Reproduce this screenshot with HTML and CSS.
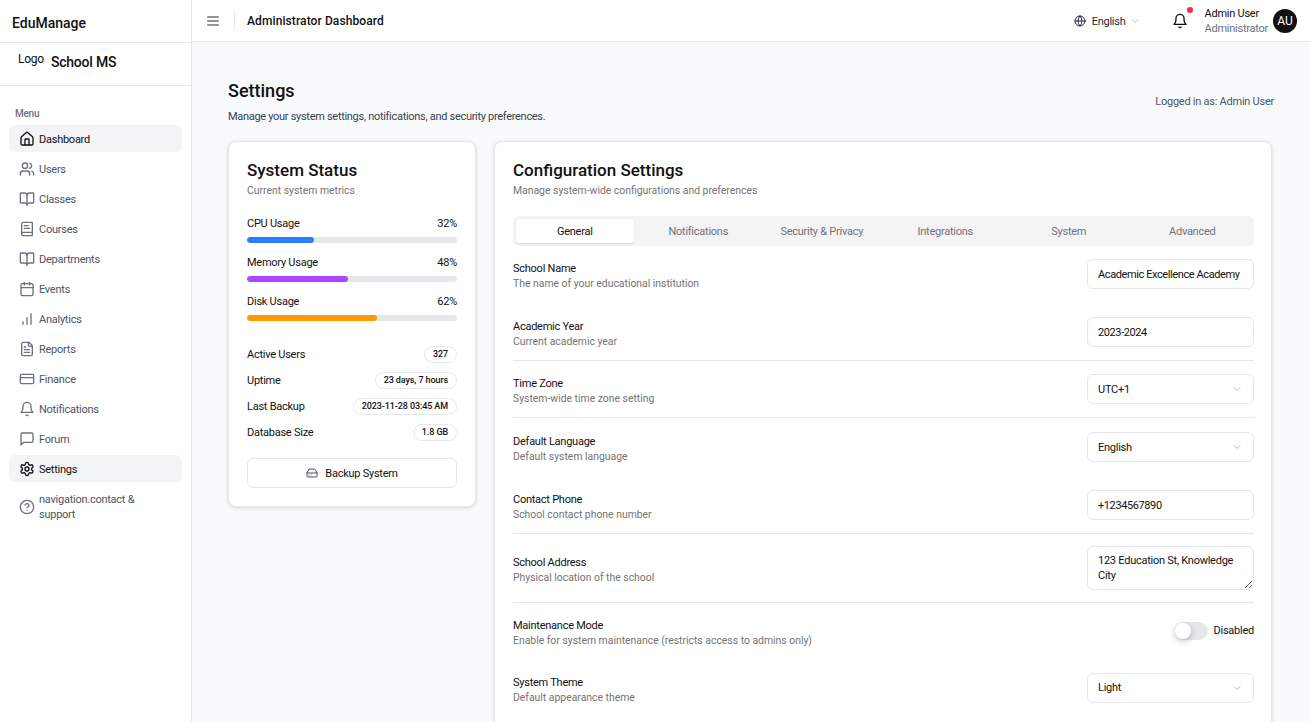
FILE: index.html
```html
<!DOCTYPE html>
<html lang="en">
<head>
  <meta charset="UTF-8" />
  <title>EduManage – Settings</title>
  <link rel="stylesheet" href="styles.css">
</head>
<body>
  <svg class="defs" width="0" height="0">
    <symbol id="i-home" viewBox="0 0 24 24"><path d="M15 21v-8a1 1 0 0 0-1-1h-4a1 1 0 0 0-1 1v8"/><path d="M3 10a2 2 0 0 1 .709-1.528l7-5.999a2 2 0 0 1 2.582 0l7 5.999A2 2 0 0 1 21 10v9a2 2 0 0 1-2 2H5a2 2 0 0 1-2-2z"/></symbol>
    <symbol id="i-users" viewBox="0 0 24 24"><path d="M16 21v-2a4 4 0 0 0-4-4H6a4 4 0 0 0-4 4v2"/><circle cx="9" cy="7" r="4"/><path d="M22 21v-2a4 4 0 0 0-3-3.87"/><path d="M16 3.13a4 4 0 0 1 0 7.75"/></symbol>
    <symbol id="i-book" viewBox="0 0 24 24"><path d="M12 7v14"/><path d="M3 18a1 1 0 0 1-1-1V4a1 1 0 0 1 1-1h5a4 4 0 0 1 4 4 4 4 0 0 1 4-4h5a1 1 0 0 1 1 1v13a1 1 0 0 1-1 1h-6a3 3 0 0 0-3 3 3 3 0 0 0-3-3z"/></symbol>
    <symbol id="i-booktext" viewBox="0 0 24 24"><path d="M4 19.5v-15A2.5 2.5 0 0 1 6.5 2H19a1 1 0 0 1 1 1v18a1 1 0 0 1-1 1H6.5a1 1 0 0 1 0-5H20"/><path d="M8 11h8"/><path d="M8 7h6"/></symbol>
    <symbol id="i-calendar" viewBox="0 0 24 24"><path d="M8 2v4"/><path d="M16 2v4"/><rect x="3" y="4" width="18" height="18" rx="2"/><path d="M3 10h18"/></symbol>
    <symbol id="i-chart" viewBox="0 0 24 24"><path d="M12 20V10"/><path d="M18 20V4"/><path d="M6 20v-4"/></symbol>
    <symbol id="i-file" viewBox="0 0 24 24"><path d="M15 2H6a2 2 0 0 0-2 2v16a2 2 0 0 0 2 2h12a2 2 0 0 0 2-2V7Z"/><path d="M14 2v4a2 2 0 0 0 2 2h4"/><path d="M10 9H8"/><path d="M16 13H8"/><path d="M16 17H8"/></symbol>
    <symbol id="i-card" viewBox="0 0 24 24"><rect x="2" y="5" width="20" height="14" rx="2"/><path d="M2 10h20"/></symbol>
    <symbol id="i-bell" viewBox="0 0 24 24"><path d="M6 8a6 6 0 0 1 12 0c0 7 3 9 3 9H3s3-2 3-9"/><path d="M10.3 21a1.94 1.94 0 0 0 3.4 0"/></symbol>
    <symbol id="i-message" viewBox="0 0 24 24"><path d="M21 15a2 2 0 0 1-2 2H7l-4 4V5a2 2 0 0 1 2-2h14a2 2 0 0 1 2 2z"/></symbol>
    <symbol id="i-gear" viewBox="0 0 24 24"><path d="M12.22 2h-.44a2 2 0 0 0-2 2v.18a2 2 0 0 1-1 1.73l-.43.25a2 2 0 0 1-2 0l-.15-.08a2 2 0 0 0-2.73.73l-.22.38a2 2 0 0 0 .73 2.73l.15.1a2 2 0 0 1 1 1.72v.51a2 2 0 0 1-1 1.74l-.15.09a2 2 0 0 0-.73 2.73l.22.38a2 2 0 0 0 2.73.73l.15-.08a2 2 0 0 1 2 0l.43.25a2 2 0 0 1 1 1.73V20a2 2 0 0 0 2 2h.44a2 2 0 0 0 2-2v-.18a2 2 0 0 1 1-1.73l.43-.25a2 2 0 0 1 2 0l.15.08a2 2 0 0 0 2.73-.73l.22-.39a2 2 0 0 0-.73-2.73l-.15-.08a2 2 0 0 1-1-1.74v-.5a2 2 0 0 1 1-1.74l.15-.09a2 2 0 0 0 .73-2.73l-.22-.38a2 2 0 0 0-2.73-.73l-.15.08a2 2 0 0 1-2 0l-.43-.25a2 2 0 0 1-1-1.73V4a2 2 0 0 0-2-2z"/><circle cx="12" cy="12" r="3"/></symbol>
    <symbol id="i-help" viewBox="0 0 24 24"><circle cx="12" cy="12" r="10"/><path d="M9.09 9a3 3 0 0 1 5.83 1c0 2-3 3-3 3"/><path d="M12 17h.01"/></symbol>
    <symbol id="i-globe" viewBox="0 0 24 24"><circle cx="12" cy="12" r="10"/><path d="M12 2a14.5 14.5 0 0 0 0 20 14.5 14.5 0 0 0 0-20"/><path d="M2 12h20"/></symbol>
    <symbol id="i-chevron" viewBox="0 0 24 24"><path d="m6 9 6 6 6-6"/></symbol>
    <symbol id="i-menu" viewBox="0 0 24 24"><path d="M4 6h16"/><path d="M4 12h16"/><path d="M4 18h16"/></symbol>
    <symbol id="i-drive" viewBox="0 0 24 24"><path d="M22 12H2"/><path d="M5.45 5.11 2 12v6a2 2 0 0 0 2 2h16a2 2 0 0 0 2-2v-6l-3.45-6.89A2 2 0 0 0 16.76 4H7.24a2 2 0 0 0-1.79 1.11z"/><path d="M6 16h.01"/><path d="M10 16h.01"/></symbol>
  </svg>

  <aside class="sidebar">
    <div class="brand">EduManage</div>
    <div class="school"><span class="logo-alt">Logo</span><span class="school-name">School MS</span></div>
    <nav class="nav">
      <div class="nav-label">Menu</div>
      <a class="nav-item active"><svg class="icon"><use href="#i-home"/></svg>Dashboard</a>
      <a class="nav-item"><svg class="icon"><use href="#i-users"/></svg>Users</a>
      <a class="nav-item"><svg class="icon"><use href="#i-book"/></svg>Classes</a>
      <a class="nav-item"><svg class="icon"><use href="#i-booktext"/></svg>Courses</a>
      <a class="nav-item"><svg class="icon"><use href="#i-book"/></svg>Departments</a>
      <a class="nav-item"><svg class="icon"><use href="#i-calendar"/></svg>Events</a>
      <a class="nav-item"><svg class="icon"><use href="#i-chart"/></svg>Analytics</a>
      <a class="nav-item"><svg class="icon"><use href="#i-file"/></svg>Reports</a>
      <a class="nav-item"><svg class="icon"><use href="#i-card"/></svg>Finance</a>
      <a class="nav-item"><svg class="icon"><use href="#i-bell"/></svg>Notifications</a>
      <a class="nav-item"><svg class="icon"><use href="#i-message"/></svg>Forum</a>
      <a class="nav-item active"><svg class="icon"><use href="#i-gear"/></svg>Settings</a>
      <a class="nav-item tall"><svg class="icon"><use href="#i-help"/></svg>navigation.contact &amp; support</a>
    </nav>
  </aside>

  <div class="content">
    <header class="topbar">
      <button class="menu-btn"><svg class="icon"><use href="#i-menu"/></svg></button>
      <h1 class="topbar-title">Administrator Dashboard</h1>
      <div class="topbar-right">
        <div class="lang"><svg class="icon-sm"><use href="#i-globe"/></svg><span class="lang-name">English</span><svg class="chev"><use href="#i-chevron"/></svg></div>
        <div class="bell"><svg class="icon"><use href="#i-bell"/></svg><span class="dot"></span></div>
        <div class="user">
          <div class="user-text"><div class="user-name">Admin User</div><div class="user-role">Administrator</div></div>
          <div class="avatar">AU</div>
        </div>
      </div>
    </header>

    <main class="main">
      <div class="page-head">
        <div>
          <h2 class="page-title">Settings</h2>
          <p class="page-sub">Manage your system settings, notifications, and security preferences.</p>
        </div>
        <div class="logged">Logged in as: Admin User</div>
      </div>

      <div class="columns">
        <section class="card status">
          <h3 class="card-title">System Status</h3>
          <p class="card-sub">Current system metrics</p>

          <div class="metric">
            <div class="metric-row"><span>CPU Usage</span><span>32%</span></div>
            <div class="bar"><div class="bar-fill blue" style="width:32%"></div></div>
          </div>
          <div class="metric">
            <div class="metric-row"><span>Memory Usage</span><span>48%</span></div>
            <div class="bar"><div class="bar-fill purple" style="width:48%"></div></div>
          </div>
          <div class="metric">
            <div class="metric-row"><span>Disk Usage</span><span>62%</span></div>
            <div class="bar"><div class="bar-fill orange" style="width:62%"></div></div>
          </div>

          <div class="facts">
            <div class="fact"><span>Active Users</span><span class="pill">327</span></div>
            <div class="fact"><span>Uptime</span><span class="pill">23 days, 7 hours</span></div>
            <div class="fact"><span>Last Backup</span><span class="pill">2023-11-28 03:45 AM</span></div>
            <div class="fact"><span>Database Size</span><span class="pill">1.8 GB</span></div>
          </div>

          <button class="backup"><svg class="icon-sm"><use href="#i-drive"/></svg>Backup System</button>
        </section>

        <section class="card config">
          <h3 class="card-title">Configuration Settings</h3>
          <p class="card-sub">Manage system-wide configurations and preferences</p>

          <div class="tabs">
            <div class="tab selected">General</div>
            <div class="tab">Notifications</div>
            <div class="tab">Security &amp; Privacy</div>
            <div class="tab">Integrations</div>
            <div class="tab">System</div>
            <div class="tab">Advanced</div>
          </div>

          <div class="rows">
            <div class="row">
              <div class="row-text"><div class="row-label">School Name</div><div class="row-help">The name of your educational institution</div></div>
              <input class="field" value="Academic Excellence Academy">
            </div>
            <div class="row line">
              <div class="row-text"><div class="row-label">Academic Year</div><div class="row-help">Current academic year</div></div>
              <input class="field" value="2023-2024">
            </div>
            <div class="row line">
              <div class="row-text"><div class="row-label">Time Zone</div><div class="row-help">System-wide time zone setting</div></div>
              <div class="field select">UTC+1<svg class="chev"><use href="#i-chevron"/></svg></div>
            </div>
            <div class="row">
              <div class="row-text"><div class="row-label">Default Language</div><div class="row-help">Default system language</div></div>
              <div class="field select">English<svg class="chev"><use href="#i-chevron"/></svg></div>
            </div>
            <div class="row line">
              <div class="row-text"><div class="row-label">Contact Phone</div><div class="row-help">School contact phone number</div></div>
              <input class="field" value="+1234567890">
            </div>
            <div class="row line area-row">
              <div class="row-text"><div class="row-label">School Address</div><div class="row-help">Physical location of the school</div></div>
              <textarea class="field area">123 Education St, Knowledge City</textarea>
            </div>
            <div class="row toggle-row">
              <div class="row-text"><div class="row-label">Maintenance Mode</div><div class="row-help">Enable for system maintenance (restricts access to admins only)</div></div>
              <div class="toggle-wrap"><span class="toggle"><span class="knob"></span></span>Disabled</div>
            </div>
            <div class="row">
              <div class="row-text"><div class="row-label">System Theme</div><div class="row-help">Default appearance theme</div></div>
              <div class="field select">Light<svg class="chev"><use href="#i-chevron"/></svg></div>
            </div>
          </div>
        </section>
      </div>
    </main>
  </div>
</body>
</html>
```

FILE: styles.css
```css
:root {
  --text: #111;
  --muted: #737373;
  --line: #e5e7eb;
  --bg: #f9fafb;
}

* {
  box-sizing: border-box;
}

html, body {
  height: 100%;
}

body {
  margin: 0;
  display: flex;
  overflow: hidden;
  font-family: Roboto, "Noto Sans", sans-serif;
  font-size: 11px;
  letter-spacing: -0.25px;
  color: var(--text);
  background: var(--bg);
}

.defs {
  position: absolute;
}

svg {
  fill: none;
  stroke: currentColor;
  stroke-width: 2;
  stroke-linecap: round;
  stroke-linejoin: round;
  flex-shrink: 0;
}

.icon {
  width: 16px;
  height: 16px;
}

.icon-sm {
  width: 12px;
  height: 12px;
}

.chev {
  width: 12px;
  height: 12px;
  stroke-width: 1.2;
  color: #8b8f97;
}

/* sidebar */
.sidebar {
  width: 192px;
  flex-shrink: 0;
  background: #fff;
  border-right: 1px solid var(--line);
  display: flex;
  flex-direction: column;
}

.brand {
  height: 43px;
  padding: 3px 12px 0;
  display: flex;
  align-items: center;
  font-size: 14px;
  font-weight: 500;
  letter-spacing: 0;
  border-bottom: 1px solid var(--line);
}

.school {
  height: 43px;
  padding: 9px 18px 0;
  display: flex;
  gap: 7px;
  border-bottom: 1px solid var(--line);
}

.logo-alt {
  font-size: 12px;
  line-height: 15px;
}

.school-name {
  font-size: 14px;
  font-weight: 500;
  line-height: 18px;
  margin-top: 1px;
  letter-spacing: -0.2px;
}

.nav {
  padding: 22px 9px 0;
}

.nav-label {
  font-size: 10px;
  font-weight: 500;
  line-height: 12px;
  color: #6b7280;
  padding-left: 6px;
  margin-bottom: 5px;
}

.nav-item {
  height: 27px;
  margin-bottom: 3px;
  padding: 1px 10px 0;
  display: flex;
  align-items: center;
  gap: 4px;
  border-radius: 6px;
  color: #4b5563;
}

.nav-item .icon {
  color: #6b7280;
}

.nav-item.active {
  background: #f3f4f6;
  color: var(--text);
}

.nav-item.active .icon {
  color: var(--text);
}

.nav-item.tall {
  height: 32px;
  margin-top: 8px;
  line-height: 15px;
}

/* top bar */
.content {
  flex: 1;
  min-width: 0;
  display: flex;
  flex-direction: column;
}

.topbar {
  height: 42px;
  flex-shrink: 0;
  padding: 0 13px;
  display: flex;
  align-items: center;
  background: #fff;
  border-bottom: 1px solid var(--line);
}

.menu-btn {
  padding: 0;
  border: none;
  background: none;
  color: #6b7280;
  display: flex;
  margin-right: 13px;
}

.topbar-title {
  margin: 0;
  padding: 1px 0 0 12px;
  border-left: 1px solid var(--line);
  font-size: 12px;
  font-weight: 500;
  letter-spacing: 0.1px;
  line-height: 18px;
}

.topbar-right {
  margin-left: auto;
  display: flex;
  align-items: center;
}

.lang {
  display: flex;
  align-items: center;
  gap: 6px;
  margin-right: 31px;
  color: #1f2937;
}

.lang-name {
  margin-top: 1px;
}

.lang .chev {
  margin-left: -3px;
}

.bell {
  position: relative;
  display: flex;
  margin-right: 17px;
}

.dot {
  position: absolute;
  top: -6px;
  right: -5px;
  width: 6px;
  height: 6px;
  border-radius: 50%;
  background: #fb2c36;
}

.user {
  display: flex;
  align-items: center;
  gap: 5px;
}

.user-name {
  line-height: 15px;
}

.user-role {
  line-height: 15px;
  color: #6b7280;
}

.avatar {
  width: 24px;
  height: 24px;
  border-radius: 50%;
  background: #111;
  color: #fff;
  font-size: 12px;
  letter-spacing: 0;
  display: flex;
  align-items: center;
  justify-content: center;
}

/* page */
.main {
  flex: 1;
  padding: 38px 36px 0;
}

.page-head {
  display: flex;
  justify-content: space-between;
  align-items: center;
  margin-bottom: 18px;
}

.page-title {
  margin: 0;
  font-size: 18px;
  font-weight: 500;
  letter-spacing: 0;
  line-height: 22px;
}

.page-sub {
  margin: 8px 0 0;
  letter-spacing: -0.3px;
  line-height: 13px;
  color: #374151;
}

.logged {
  line-height: 13px;
  color: #4b5563;
}

.columns {
  display: grid;
  grid-template-columns: 248px 778px;
  gap: 18px;
  align-items: start;
}

.card {
  background: #fff;
  border: 1px solid var(--line);
  border-radius: 8px;
  box-shadow: 0 1px 4px rgba(0, 0, 0, 0.14);
  padding: 18px;
}

.config {
  padding-right: 17px;
}

.card-title {
  margin: 0;
  font-size: 17px;
  font-weight: 500;
  letter-spacing: 0;
  line-height: 20px;
}

.card-sub {
  margin: 5px 0 0;
  font-size: 10.4px;
  letter-spacing: 0;
  line-height: 12px;
  color: var(--muted);
}

/* status card */
.metric {
  margin-top: 12px;
}

.status .card-sub + .metric {
  margin-top: 19px;
}

.metric-row {
  display: flex;
  justify-content: space-between;
  line-height: 15px;
  margin-bottom: 6px;
}

.bar {
  height: 6px;
  border-radius: 3px;
  background: var(--line);
  overflow: hidden;
}

.bar-fill {
  height: 100%;
  border-radius: 3px;
}

.blue {
  background: #2b7fff;
}

.purple {
  background: #ad46ff;
}

.orange {
  background: #fe9a00;
}

.facts {
  margin-top: 25px;
  display: flex;
  flex-direction: column;
  gap: 9px;
}

.fact {
  display: flex;
  justify-content: space-between;
  align-items: center;
  height: 17px;
}

.pill {
  padding: 0 8px;
  border: 1px solid var(--line);
  border-radius: 9px;
  font-size: 9px;
  font-weight: 500;
  letter-spacing: -0.1px;
  line-height: 15px;
}

.backup {
  width: 100%;
  height: 30px;
  margin-top: 17px;
  display: flex;
  align-items: center;
  justify-content: center;
  gap: 7px;
  background: #fff;
  border: 1px solid var(--line);
  border-radius: 6px;
  font: inherit;
  letter-spacing: inherit;
  color: var(--text);
}

.backup .icon-sm {
  color: #4b5563;
}

/* config card */
.tabs {
  margin-top: 19px;
  height: 30px;
  display: grid;
  grid-template-columns: repeat(6, 1fr);
  background: #f4f4f5;
  border-radius: 6px;
}

.tab {
  margin: 3px;
  display: flex;
  align-items: center;
  justify-content: center;
  border-radius: 4px;
  color: #71717a;
}

.tab.selected {
  background: #fff;
  color: var(--text);
  box-shadow: 0 1px 2px rgba(0, 0, 0, 0.1);
}

.rows {
  margin-top: -1px;
}

.row {
  display: flex;
  justify-content: space-between;
  align-items: center;
  height: 57.8px;
  padding-top: 1px;
  border-bottom: 1px solid transparent;
}

.row.line {
  border-bottom-color: var(--line);
}

.row-text {
  padding-top: 4px;
}

.row-label {
  line-height: 15px;
}

.row-help {
  font-size: 10.4px;
  letter-spacing: 0;
  line-height: 15px;
  color: var(--muted);
}

.field {
  width: 167px;
  height: 30px;
  padding: 0 10px;
  border: 1px solid var(--line);
  border-radius: 6px;
  background: #fff;
  font: inherit;
  letter-spacing: inherit;
  color: var(--text);
}

input.field {
  padding-top: 1px;
  letter-spacing: -0.4px;
}

.select {
  display: flex;
  align-items: center;
  justify-content: space-between;
}

.area {
  height: 44px;
  padding: 6px 10px;
  line-height: 15px;
  display: block;
}

.area-row {
  height: 69px;
}

.toggle-row {
  height: 56px;
}

.toggle-wrap {
  display: flex;
  align-items: center;
  gap: 6px;
}

.toggle {
  width: 33px;
  height: 18px;
  margin-top: 1px;
  border-radius: 9px;
  background: var(--line);
  display: flex;
  align-items: center;
}

.knob {
  width: 16px;
  height: 16px;
  border-radius: 50%;
  background: #fff;
  box-shadow: 0 2px 6px rgba(0, 0, 0, 0.25);
}
```
